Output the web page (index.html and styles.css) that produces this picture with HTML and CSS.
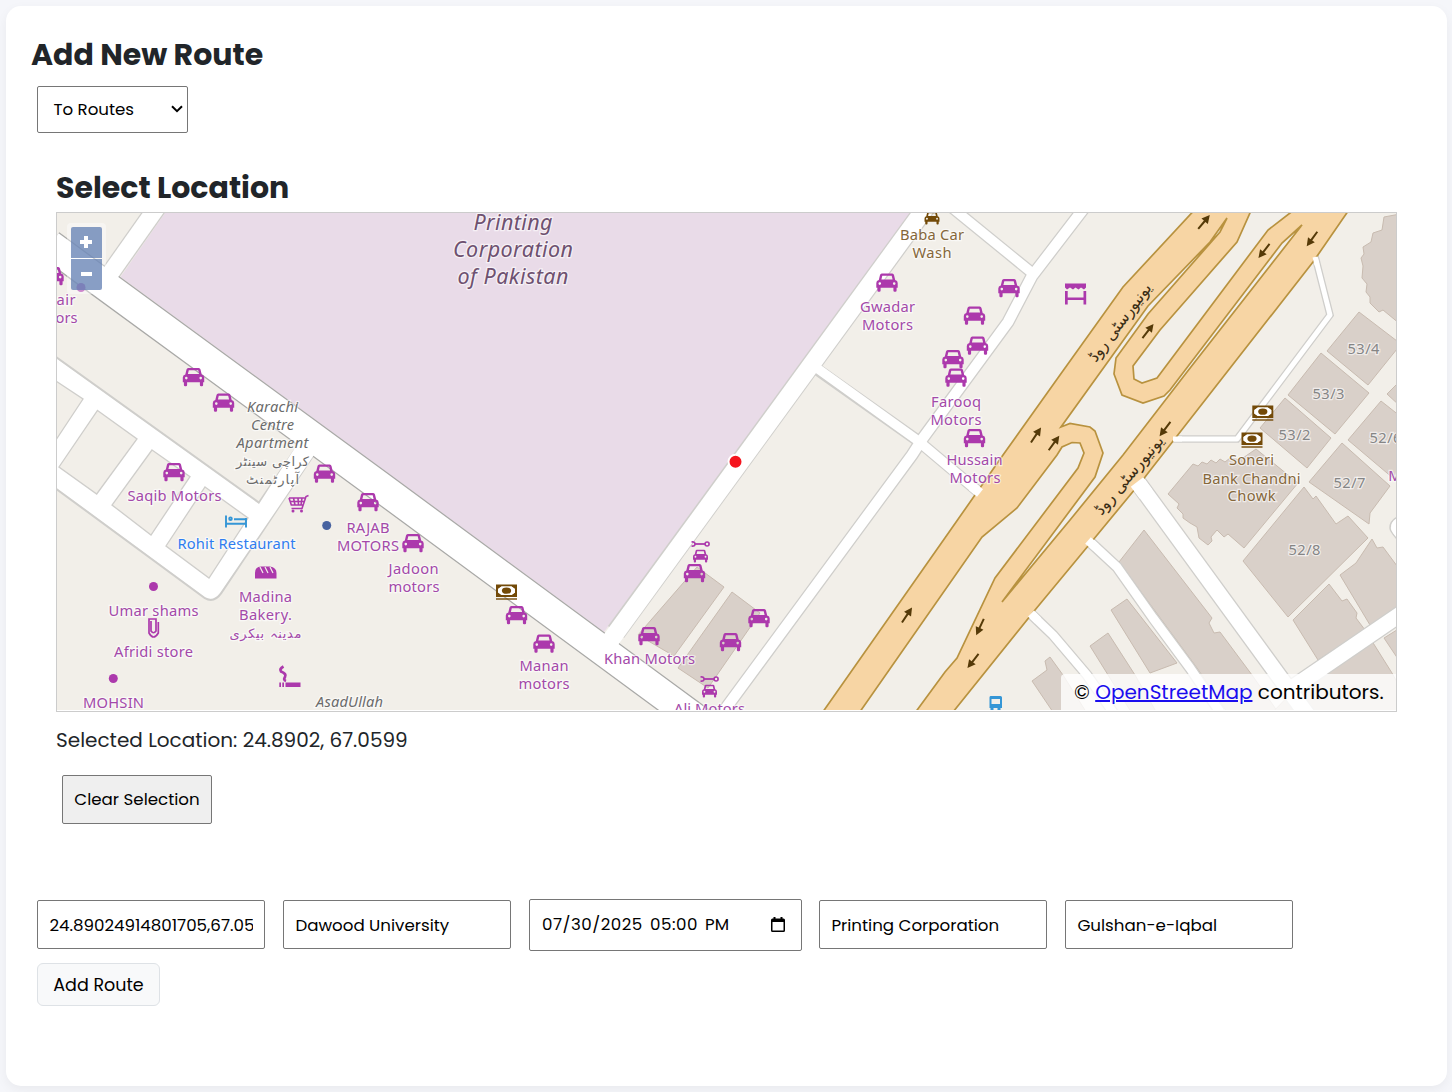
FILE: index.html
```html
<!DOCTYPE html>
<html lang="en">
<head>
<meta charset="utf-8">
<title>Add New Route</title>
<link rel="stylesheet" href="styles.css">
</head>
<body>
<main class="card">
  <h2 class="title">Add New Route</h2>
  <div class="direction">
    <span>To Routes</span>
    <svg class="chevron" viewBox="0 0 12 8" width="12" height="8"><path d="M1 1.300L6 6.200L11 1.300" fill="none" stroke="#000" stroke-width="2"/></svg>
  </div>

  <section class="picker">
    <h2 class="title title-map">Select Location</h2>
    <div class="map">
      <svg class="map-canvas" viewBox="57 213 1339 497" width="1339" height="497">
        <defs>
          <path id="car" fill-rule="evenodd" d="M-7-7.500Q-6.700-9-5.200-9H5.200Q6.700-9 7-7.500L8.200-2.600Q10.700-2.200 10.700 .6V5.200H9.600V8Q9.600 9.200 8.400 9.200H7.600Q6.400 9.200 6.400 8V5.200H-6.400V8Q-6.400 9.200-7.600 9.200H-8.400Q-9.600 9.200-9.600 8V5.200H-10.700V.6Q-10.700-2.200-8.200-2.600ZM-4.700-6.800L-5.600-3H5.600L4.700-6.800ZM-7.200-.2A1.300 1.300 0 1 0-7.200 2.400A1.300 1.300 0 1 0-7.200-.2ZM7.200-.2A1.300 1.300 0 1 0 7.200 2.400A1.300 1.300 0 1 0 7.200-.2Z"/>
          <g id="repair">
            <use href="#car" transform="translate(0 6) scale(.7)"/>
            <path d="M-5.500-6H5" stroke="#ac39ac" stroke-width="1.800"/>
            <path d="M-9-8Q-5.500-8.500-5.500-6Q-5.500-3.500-9-4" fill="none" stroke="#ac39ac" stroke-width="1.700"/>
            <circle cx="6.600" cy="-6" r="2" fill="none" stroke="#ac39ac" stroke-width="1.600"/>
          </g>
          <g id="bank">
            <path fill="#734a08" fill-rule="evenodd" d="M-10.500-7.500H10.500V5H-10.500ZM-5-5.500L-8.500-3V.5L-5 3H5L8.500 .5V-3L5-5.500Z"/>
            <path fill="#fff" d="M-5-5.500L-8.500-3V.5L-5 3H5L8.500 .5V-3L5-5.500Z"/>
            <ellipse cy="-1.300" rx="4.600" ry="3.100" fill="#734a08"/>
            <path d="M-10.500 7H10.500" stroke="#734a08" stroke-width="1.400"/>
          </g>
          <path id="arrow" d="M-9-1H1V-4.200L9 0L1 4.200V1H-9Z" fill="#553a08"/>
        </defs>

        <rect class="land" x="57" y="213" width="1339" height="498"/>
        <path class="industrial" d="M165 213L120.500 277L604 632L910 213Z"/>

        <g class="building">
          <path d="M697 567L724 587L674 656L638 635Z"/>
          <path d="M732 592L760 613L708 688L678 668Z"/>
          <path d="M1144 530L1212 618L1209 623L1214 633L1220 632L1252 675L1280 715H1229L1197 668L1119 562Z"/>
          <path d="M1111 610L1127 599L1177 663L1150 673Z"/>
          <path d="M1090 646L1108 633L1135 675L1158 715H1133Z"/>
          <path d="M1032 681L1047 670L1045 661L1050 657L1063 675L1088 715H1055Z"/>
          <path d="M1168 494L1193 464L1198 466L1202 462L1207 464L1211 460L1216 463L1220 459L1225 462L1230 458L1240 460L1256 449L1298 483L1244 548L1228 534L1224 537L1217 530L1211 537L1212 541L1208 545L1199 538L1197 527L1190 523L1183 518V514L1177 508L1179 504Z"/>
          <path d="M1304 487L1313 499L1316 496L1336 524L1348 516L1368 538L1288 617L1243 561Z"/>
          <path d="M1342 443L1390 486L1370 513L1369 524L1309 482Z"/>
          <path d="M1359 312L1397 341V349L1368 385L1327 351Z"/>
          <path d="M1321 353L1369 393L1335 434L1288 395Z"/>
          <path d="M1285 398L1331 438L1307 468L1260 428Z"/>
          <path d="M1381 401L1400 416V484L1348 440Z"/>
          <path d="M1400 381L1387 394L1400 406Z"/>
          <path d="M1400 214L1384 217L1382 230L1373 233L1371 242L1363 247L1364 254L1361 258L1363 266L1362 278L1367 284L1366 292L1370 297L1370 303L1379 312L1383 310L1400 324Z"/>
          <path d="M1372 539L1377 548L1383 547L1400 570V607L1370 625L1340 575L1356 563Z"/>
          <path d="M1329 584L1342 601L1347 599L1357 613L1356 618L1365 630L1318 660L1293 620Z"/>
          <path d="M1300 684L1370 638L1392 673L1415 715H1270Z"/>
          <path d="M1384 638L1400 628V662Z"/>
        </g>

        <g class="casing">
          <path d="M160 203L105 281" stroke-width="19.500"/>
          <path d="M616 632L929 203" stroke-width="20"/>
          <path d="M818 370L917 440L980 493" stroke-width="12"/>
          <path d="M950 206L1031 272" stroke-width="12"/>
          <path d="M1088 203L1032 276L1008 322L923 438L912 455L720 716" stroke-width="13"/>
          <path d="M1315 256L1330 315L1237 439H1172" stroke-width="7.500"/>
          <path d="M1136 480L1308 716" stroke-width="18"/>
          <path d="M1405 611L1285 693" stroke-width="18"/>
          <path d="M1090 542L1117 567L1153 618L1190 668L1220 712" stroke-width="11.500"/>
          <path d="M1030 613L1053 635L1087 675L1115 715" stroke-width="11"/>
          <path d="M1400 516Q1390 520 1390 528Q1390 532 1400 542" stroke-width="1.500"/>
          <path class="outline" d="M50 353L259 503L297 447L312 457L221 593Q214 603 205 598L50 484Z"/>
          <path class="main" d="M50 245L380 486.500L670 700L700 722" stroke-width="31.500"/>
        </g>
        <g class="road">
          <path d="M160 203L100 288" stroke-width="17"/>
          <path d="M610 641L929 203" stroke-width="17.500"/>
          <path d="M814 366L917 440L980 493" stroke-width="9.500"/>
          <path d="M950 206L1031 272" stroke-width="9.500"/>
          <path d="M1088 203L1032 276L1008 322L923 438L912 455L720 716" stroke-width="10.500"/>
          <path d="M1315 256L1330 315L1237 439H1172" stroke-width="5"/>
          <path d="M1136 480L1308 716" stroke-width="15.500"/>
          <path d="M1405 611L1285 693" stroke-width="15.500"/>
          <path d="M1090 542L1117 567L1153 618L1190 668L1220 712" stroke-width="9"/>
          <path d="M1030 613L1053 635L1087 675L1115 715" stroke-width="8.500"/>
          <path class="fill" d="M1400 517Q1391 520 1391 528Q1391 532 1400 541Z"/>
          <path d="M50 245L380 486.500L670 700L700 722" stroke-width="29"/>
          <path class="fill" d="M50 354L259 504L300 440L316 452L220 593Q213 602 205 597L50 483Z"/>
        </g>
        <g class="block">
          <path d="M50 377L83 399L50 449Z"/>
          <path d="M97.500 410.500L137 439L96.700 494L59 467Z"/>
          <path d="M152 450L190 476.700L151 535L112 505Z"/>
          <path d="M205 487L248 518L209 578L166 546Z"/>
        </g>

        <path class="trunk" fill-rule="evenodd" d="M1200 204L1123 287L1060 375L1003 455L947 535L820 716H857L982 537L1017 508L1057 455L1062 447L1072 442.500L1080 443L1084 453L1078 468L995 578L957 658L945 672L912 717H949L1035 610L1093 540L1145 477L1313 262L1353 204H1302L1290 213L1268 230L1163 370L1157 378L1142 383L1134 379L1133 366L1160 330L1237 242L1254 204ZM1227 218L1210 242L1148 306L1061 427L1070 423.500L1090 427L1095 431L1103 453L1095 477L1002 602L1070 520L1123 455L1187 372L1302 225L1282 243L1170 390L1164 396L1143 403L1122 395L1114 374L1116 358L1148 314L1220 232Z"/>
        <g class="road">
          <path d="M972 486.500L980 493" stroke-width="9.500"/>
          <path d="M1315 257L1317 265" stroke-width="5"/>
          <path d="M1173 439H1182" stroke-width="5"/>
          <path d="M1137 482L1146 494" stroke-width="15.500"/>
          <path d="M1088 540.500L1096 547.500" stroke-width="8.500"/>
          <path d="M1031 613.500L1038 620.500" stroke-width="8.500"/>
        </g>

        <g>
          <use href="#arrow" transform="translate(1204 222) rotate(-50)"/>
          <use href="#arrow" transform="translate(1264 251) rotate(128)"/>
          <use href="#arrow" transform="translate(1312 239) rotate(126)"/>
          <use href="#arrow" transform="translate(1148 331) rotate(-52)"/>
          <use href="#arrow" transform="translate(1036 435) rotate(-56)"/>
          <use href="#arrow" transform="translate(1054 443) rotate(-54)"/>
          <use href="#arrow" transform="translate(1165 429) rotate(127)"/>
          <use href="#arrow" transform="translate(907 615) rotate(-56)"/>
          <use href="#arrow" transform="translate(980 627) rotate(115)"/>
          <use href="#arrow" transform="translate(973 661) rotate(128)"/>
        </g>

        <g class="shop">
          <use href="#car" x="53" y="276"/><circle cx="81" cy="287.500" r="4.500"/>
          <use href="#car" x="193.500" y="377"/><use href="#car" x="223.500" y="402.500"/>
          <use href="#car" x="174" y="472"/><use href="#car" x="324.500" y="473.500"/>
          <use href="#car" x="368" y="502"/><use href="#car" x="413" y="543"/>
          <use href="#car" x="516.500" y="615"/><use href="#car" x="544" y="643.500"/>
          <use href="#car" x="694.500" y="573"/><use href="#car" x="649" y="636"/>
          <use href="#car" x="759" y="618"/><use href="#car" x="730.500" y="642"/>
          <use href="#car" x="887" y="282.500"/><use href="#car" x="1009" y="288"/>
          <use href="#car" x="974.500" y="315.500"/><use href="#car" x="977.500" y="345.500"/>
          <use href="#car" x="953" y="359"/><use href="#car" x="956" y="377.500"/>
          <use href="#car" x="974.500" y="438"/>
          <use href="#repair" x="700.500" y="550"/><use href="#repair" x="709.500" y="685"/>
          <circle cx="153.500" cy="586.500" r="4.500"/><circle cx="113.300" cy="678.500" r="4.500"/>
          <!-- bakery loaf -->
          <path d="M255 578.500V573Q255 566.500 261 566.500H270Q276.500 567.500 276.500 573V578.500Z"/>
          <path d="M260 567L263 573M265 567L268 573M270 567L273 573" stroke="#f2efe9" stroke-width="1.200"/>
          <!-- smoking -->
          <path d="M285.500 682.500H300.500V687H285.500ZM282.300 682.500H284V687H282.300ZM279.300 682.500H281V687H279.300Z"/>
          <path class="line" stroke-width="2.800" d="M283.500 666.500Q279 669 281 671.500Q287 674 285 677Q283 680 286 681"/>
          <!-- market stall -->
          <path d="M1065 283.500H1086V287.500L1084 289.500L1081 287.500L1078.500 289.500L1075.500 287.500L1073 289.500L1070 287.500L1067 289.500L1065 287.500ZM1065 291H1067.700V297.500H1083.500V291H1086.200V304.500H1083.500V300H1067.700V304.500H1065Z"/>
          <!-- shopping cart -->
          <path class="line" d="M308.500 495.500L306 496.500L302 508.500H291.500M289 498H305M290 501.500H304M291 505H303M289 498L291.500 505.500M293.500 498L295 505M298 498L298.500 505M302 498L301 505" stroke-width="1.600"/>
          <circle cx="293" cy="511" r="1.500"/><circle cx="301.500" cy="511" r="1.500"/>
          <!-- paperclip -->
          <path class="line" stroke-width="1.700" d="M151 621V631Q153.500 634.500 156 631V619H149V633Q153.500 641 158.300 633V622"/>
        </g>
        <use href="#car" transform="translate(932 218) scale(.7)" fill="#734a08"/>
        <use href="#bank" x="506.500" y="592"/><use href="#bank" x="1262.800" y="413"/><use href="#bank" x="1252" y="440"/>
        <circle cx="326.700" cy="525.500" r="4.500" fill="#4863a0"/>
        <g fill="none" stroke="#3596d6" stroke-width="1.900"><path d="M226 515.500V527.500M226 523.700H246M246 518V527.500M234 519.300H246V523"/><circle cx="230.500" cy="518.700" r="1.300"/></g>
        <path fill="#3596d6" fill-rule="evenodd" d="M990.500 696H1000.500Q1002 696 1002 697.500V708H1000.500V710H997.500V708H993.500V710H990.500V708H989.500V697.500Q989.500 696 990.500 696ZM991.500 699V704H1000V699Z"/>

        <g class="label">
          <text x="66" y="305" textLength="19">air</text><text x="66.500" y="323" textLength="22">ors</text>
          <text x="174.500" y="501.500" textLength="94">Saqib Motors</text>
          <text x="368" y="533" textLength="43">RAJAB</text><text x="368" y="551" textLength="62">MOTORS</text>
          <text x="413.500" y="574" textLength="50">Jadoon</text><text x="414" y="592" textLength="51">motors</text>
          <text x="153.500" y="616.500" textLength="90">Umar shams</text><text x="153.500" y="657.500" textLength="79">Afridi store</text>
          <text x="265.500" y="602" textLength="53">Madina</text><text x="265.500" y="620" textLength="53">Bakery.</text>
          <text class="urdu" x="265.500" y="638" textLength="72">مدینہ بیکری</text>
          <text x="113.500" y="708" textLength="61">MOHSIN</text>
          <text x="544" y="671" textLength="49">Manan</text><text x="544" y="689" textLength="51">motors</text>
          <text x="649.500" y="664" textLength="91">Khan Motors</text><text x="709.500" y="714.500" textLength="71">Ali Motors</text>
          <text x="887.500" y="312" textLength="55">Gwadar</text><text x="887.500" y="330" textLength="51">Motors</text>
          <text x="956" y="407" textLength="50">Farooq</text><text x="956" y="425" textLength="51">Motors</text>
          <text x="974.500" y="465.500" textLength="56">Hussain</text><text x="975" y="483.500" textLength="51">Motors</text>
          <text x="1395" y="481">M</text>
        </g>
        <g class="label brown">
          <text x="932" y="240" textLength="64">Baba Car</text><text x="932" y="258" textLength="39">Wash</text>
          <text x="1251.500" y="465.500" textLength="45">Soneri</text><text x="1251.500" y="484" textLength="98">Bank Chandni</text><text x="1251.500" y="501.500" textLength="48">Chowk</text>
        </g>
        <text class="label blue" x="236.500" y="549" textLength="118">Rohit Restaurant</text>
        <g class="label grey">
          <text x="272.500" y="412" textLength="51">Karachi</text><text x="272.500" y="430" textLength="43">Centre</text><text x="272.500" y="448" textLength="72">Apartment</text>
          <text class="urdu" x="272.500" y="466" textLength="73">کراچی سینٹر</text><text class="urdu" x="272.500" y="484" textLength="53">آپارٹمنٹ</text>
          <text x="349.500" y="707" textLength="67">AsadUllah</text>
        </g>
        <g class="label number">
          <text x="1363.500" y="354" textLength="32">53/4</text><text x="1328.500" y="399.500" textLength="32">53/3</text><text x="1294.500" y="440" textLength="32">53/2</text>
          <text x="1385.500" y="443" textLength="32">52/6</text><text x="1349.500" y="488.500" textLength="32">52/7</text><text x="1304.500" y="555.500" textLength="32">52/8</text>
        </g>
        <g class="label place">
          <text x="513" y="230" textLength="79">Printing</text><text x="513" y="257" textLength="120">Corporation</text><text x="513" y="284" textLength="111">of Pakistan</text>
        </g>
        <g class="label street">
          <text transform="translate(1124 326) rotate(-53)" textLength="94">یونیورسٹی روڈ</text>
          <text transform="translate(1133 479) rotate(-50)" textLength="98">یونیورسٹی روڈ</text>
        </g>
        <circle cx="735.500" cy="461.800" r="7" fill="#f5141e" stroke="#fff" stroke-width="2"/>
      </svg>
      <div class="zoom"><button class="zoom-btn zoom-in" aria-label="Zoom in"></button><button class="zoom-btn" aria-label="Zoom out"></button></div>
      <div class="credit">© <a href="#">OpenStreetMap</a> contributors.</div>
    </div>
    <p class="selected">Selected Location: 24.8902, 67.0599</p>
    <button class="clear">Clear Selection</button>
  </section>

  <form class="fields">
    <input class="field" value="24.89024914801705,67.05">
    <input class="field" value="Dawood University">
    <div class="field field-date">
      <span class="date">07/30/2025</span><span class="time">05:00</span><span>PM</span>
      <svg class="calendar" viewBox="0 0 14 15" width="14" height="15"><path fill-rule="evenodd" d="M2.500 0H4.500V1.500H9.500V0H11.500V1.500H12.500Q14 1.500 14 3V13.500Q14 15 12.500 15H1.500Q0 15 0 13.500V3Q0 1.500 1.500 1.500H2.500ZM1.500 5V13.500H12.500V5Z"/></svg>
    </div>
    <input class="field" value="Printing Corporation">
    <input class="field" value="Gulshan-e-Iqbal">
  </form>
  <button class="add">Add Route</button>
</main>
</body>
</html>
```
FILE: styles.css
```css
* { box-sizing: border-box; }
body {
  margin: 0;
  padding: 6px 5px 6px 6px;
  height: 1092px;
  overflow: hidden;
  background: #f5f6fa;
  font-family: Poppins, Inter, sans-serif;
  color: #212529;
}
.card {
  height: 1080px;
  padding: 26px 25px;
  border-radius: 15px;
  background: #fff;
  box-shadow: 0 4px 12px rgba(0, 0, 0, .05);
}
.title { margin: 0; height: 45px; font-size: 30px; line-height: 45px; font-weight: 700; }
.direction {
  display: flex;
  align-items: center;
  justify-content: space-between;
  width: 151px;
  height: 47px;
  margin: 9px 6px 0;
  padding: 0 4px 1px 15.4px;
  border: 1px solid #767676;
  border-radius: 2px;
  background-color: #fff;
  color: #000;
  font-size: 16.67px;
  line-height: 24px;
}
.picker { margin: 32px 25px 0; }
.title-map { height: 47px; }
.map { position: relative; height: 500px; border: 1px solid #ccc; overflow: hidden; }
.map-canvas { display: block; }

.land { fill: #f2efe9; }
.industrial { fill: #e9dbe8; }
.building { fill: #d9d0c9; stroke: #c8bbb0; stroke-width: 1; }
.casing { fill: none; stroke: #cfcecb; }
.casing .outline { stroke-width: 2.5; }
.casing .main { stroke: #a9a9a7; }
.road { fill: none; stroke: #fff; stroke-linejoin: round; }
.road .fill { fill: #fff; stroke: none; }
.block { fill: #f2efe9; stroke: #cfcecb; stroke-width: 1.3; }
.trunk { fill: #f7d5a4; stroke: #b8923f; stroke-width: 1.7; }
.shop { fill: #ac39ac; }
.shop .line { fill: none; stroke: #ac39ac; }

.label {
  fill: #a349a9;
  font: 14.7px "Noto Sans", "DejaVu Sans", sans-serif;
  text-anchor: middle;
  paint-order: stroke;
  stroke: rgba(255, 255, 255, .6);
  stroke-width: 2.5px;
  transform: translateY(-.5px);
}
.urdu { font-family: "DejaVu Sans", sans-serif; font-size: 13px; font-style: normal; }
.brown { fill: #85673a; }
.blue { fill: #2f7df0; }
.grey { fill: #6b6b6b; font-style: italic; }
.number { fill: #858585; }
.place { fill: #6e5170; font-size: 21.5px; font-style: italic; }
.street { fill: #3a2d15; stroke: none; font: 16px "DejaVu Sans", sans-serif; }

.zoom {
  position: absolute;
  left: 10px;
  top: 10px;
  display: grid;
  gap: 1px;
  padding: 4px;
  border-radius: 4px;
  background: rgba(255, 255, 255, .4);
}
.zoom-btn {
  display: grid;
  place-content: center;
  width: 31px;
  height: 31px;
  padding: 0 1px 2px 0;
  border: 0;
  border-radius: 0 0 2px 2px;
  background: rgba(96, 125, 177, .75);
}
.zoom-in { border-radius: 2px 2px 0 0; place-items: center; }
.zoom-btn::before, .zoom-in::after { content: ""; grid-area: 1 / 1; width: 11px; height: 4px; background: #fff; }
.zoom-in::before, .zoom-in::after { width: 12px; }
.zoom-in::after { width: 4px; height: 12px; }
.credit {
  position: absolute;
  right: 0;
  bottom: 1px;
  width: 335px;
  height: 36px;
  padding-left: 13px;
  border-radius: 4px 0 0 0;
  background: rgba(255, 255, 255, .8);
  color: #000;
  font-size: 20px;
  line-height: 36px;
  white-space: nowrap;
}
.credit a { color: #1a0dee; }
.selected { margin: 13px 0 0; font-size: 20px; line-height: 30px; }
button { font-family: inherit; }
.clear {
  display: block;
  width: 150px;
  height: 49px;
  margin: 20px 6px 0;
  padding: 0 0 2px;
  border: 1px solid #767676;
  border-radius: 2px;
  background: #efefef;
  color: #000;
  font-size: 16.67px;
}
.fields { display: flex; align-items: flex-start; gap: 18px; height: 52px; margin: 75px 6px 0; }
.field {
  width: 228px;
  height: 49px;
  margin: 1px 0 0;
  padding: 0 11.4px;
  border: 1px solid #767676;
  border-radius: 2px;
  background: #fff;
  color: #000;
  font: 16.67px/24px Poppins, Inter, sans-serif;
}
.field-date { display: flex; align-items: center; width: 273px; height: 52px; margin: 0; padding: 0 16px 2px 12px; }
.date { width: 108px; letter-spacing: .5px; }
.time { width: 55px; letter-spacing: .5px; }
.calendar { margin-left: auto; }
.field-date + .field { margin-left: -1px; }
.add {
  display: block;
  width: 123px;
  height: 43px;
  margin: 12px 6px 0;
  padding: 0;
  border: 1px solid #dee2e6;
  border-radius: 6px;
  background: #f8f9fa;
  color: #000;
  font-size: 17.5px;
}
```
